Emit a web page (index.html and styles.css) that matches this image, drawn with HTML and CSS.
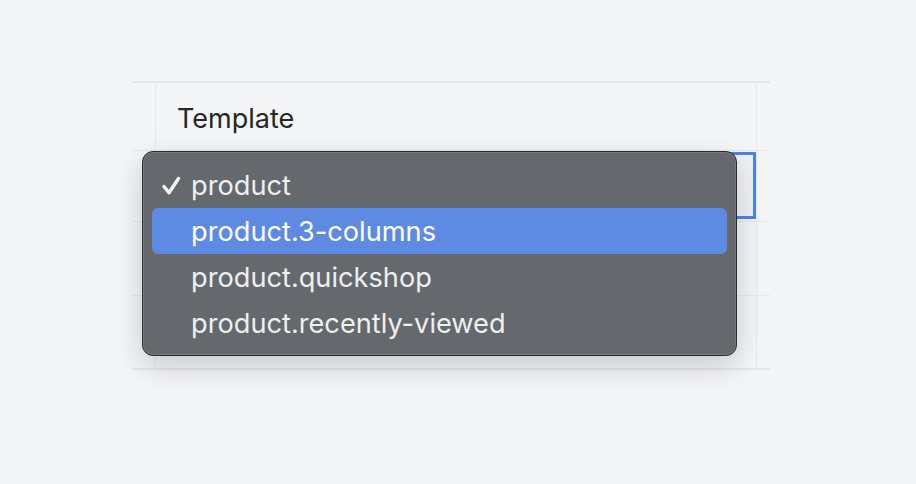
FILE: index.html
```html
<!DOCTYPE html>
<html lang="en">
<head>
  <meta charset="UTF-8">
  <meta name="viewport" content="width=device-width, initial-scale=1.0">
  <title>Template picker</title>
  <link rel="stylesheet" href="styles.css">
</head>
<body>
  <div class="sheet">
    <div class="row head-row">
      <div class="cell gutter"></div>
      <div class="cell main"><span class="head-label">Template</span></div>
      <div class="cell edge"></div>
    </div>

    <div class="row">
      <div class="cell gutter"></div>
      <div class="cell main select-cell">
        <div class="select-box"></div>

        <div class="menu">
          <div class="menu-item checked">
            <svg class="check" width="20" height="20" viewBox="0 0 20 20">
              <path d="M3 10.5 L8 16.8 L17.5 2.5" fill="none" stroke="#f4f4f4" stroke-width="3.4" stroke-linecap="round" stroke-linejoin="round"/>
            </svg>product
          </div>
          <div class="menu-item active">product.3-columns</div>
          <div class="menu-item">product.quickshop</div>
          <div class="menu-item">product.recently-viewed</div>
        </div>
      </div>
      <div class="cell edge"></div>
    </div>

    <div class="row">
      <div class="cell gutter"></div>
      <div class="cell main"></div>
      <div class="cell edge"></div>
    </div>

    <div class="row last-row">
      <div class="cell gutter"></div>
      <div class="cell main"></div>
      <div class="cell edge"></div>
    </div>
  </div>
</body>
</html>
```

FILE: styles.css
```css
body {
  font-family: 'Inter', 'Helvetica Neue', sans-serif;
  margin: 0;
  padding: 0;
  background-color: #f4f5f7;
  color: #222;
  height: 100vh;
}

.sheet {
  margin-left: 132px;
  padding-top: 81px;
  width: 638px;
}

.row {
  display: grid;
  grid-template-columns: 24px 1fr 13px;
  height: 73px;
  border-bottom: 1px solid #e6e7ea;
}

.head-row {
  height: 67px;
  border-top: 2px solid #e5e6e9;
}

.row:nth-child(2) {
  height: 70px;
}

.row:nth-child(3) {
  height: 73px;
}

.last-row {
  height: 72px;
  border-bottom: 2px solid #e5e6e9;
}

.cell {
  border-right: 1px solid #e8e9ec;
}

.cell.edge {
  border-right: none;
}

.head-label {
  display: block;
  padding: 20px 0 0 21px;
  font-size: 27px;
  line-height: 32px;
  color: #252629;
}

.select-cell {
  position: relative;
}

.select-box {
  position: absolute;
  top: 1px;
  left: 0;
  right: 0;
  bottom: 2px;
  border: 3px solid #4b84ea;
  background: linear-gradient(90deg, #eceef2, #f1f2f5);
}

.menu {
  position: absolute;
  top: 0;
  left: -14px;
  width: 595px;
  padding: 10px 9px;
  box-sizing: border-box;
  height: 205px;
  background-color: #65686d;
  border: 1px solid #2b2c2f;
  border-radius: 11px;
  box-shadow: inset 0 0 0 1px rgba(255, 255, 255, 0.12), 0 10px 30px rgba(0, 0, 0, 0.18);
  z-index: 2;
}

.menu-item {
  position: relative;
  height: 46px;
  line-height: 47px;
  padding-left: 39px;
  font-size: 27.2px;
  color: #efefef;
  border-radius: 6px;
}

.menu-item.active {
  background-color: #5f8ae3;
  color: #fff;
}

.check {
  position: absolute;
  left: 9px;
  top: 14px;
}
```
